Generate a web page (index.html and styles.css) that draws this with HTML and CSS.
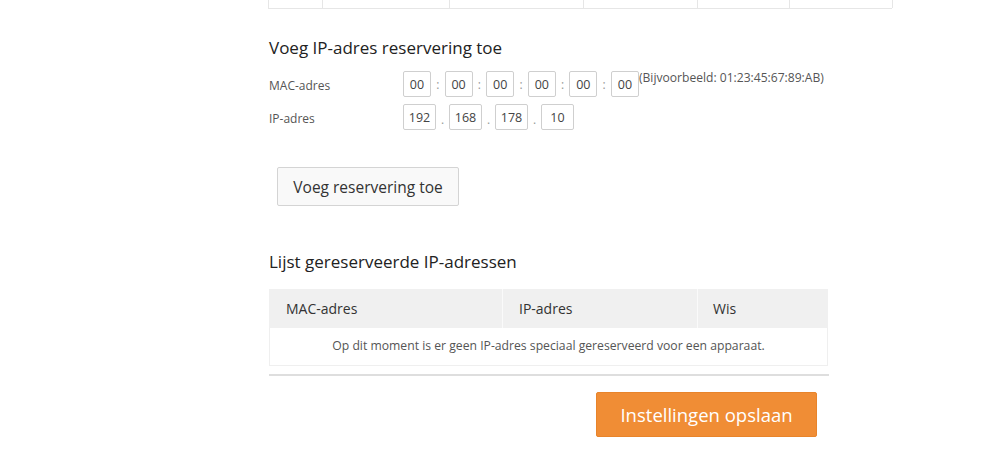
FILE: index.html
```html
<!DOCTYPE html>
<html lang="nl">
<head>
<meta charset="utf-8">
<title>IP-adres reservering</title>
<link rel="stylesheet" href="styles.css">
</head>
<body>
<div class="page">
  <div class="prev-table">
    <div class="pc"></div><div class="pc"></div><div class="pc"></div><div class="pc"></div><div class="pc"></div><div class="pc"></div>
  </div>

  <h2 class="heading h-add">Voeg IP-adres reservering toe</h2>

  <div class="form-row">
    <div class="label">MAC-adres</div>
    <div class="fields">
      <span class="box mac">00</span><span class="sep colon">:</span>
      <span class="box mac">00</span><span class="sep colon">:</span>
      <span class="box mac">00</span><span class="sep colon">:</span>
      <span class="box mac">00</span><span class="sep colon">:</span>
      <span class="box mac">00</span><span class="sep colon">:</span>
      <span class="box mac">00</span>
      <span class="example">(Bijvoorbeeld: 01:23:45:67:89:AB)</span>
    </div>
  </div>
  <div class="form-row ip-row">
    <div class="label">IP-adres</div>
    <div class="fields">
      <span class="box ip">192</span><span class="sep dot">.</span>
      <span class="box ip">168</span><span class="sep dot">.</span>
      <span class="box ip">178</span><span class="sep dot">.</span>
      <span class="box ip">10</span>
    </div>
  </div>

  <button class="btn-add" type="button">Voeg reservering toe</button>

  <h2 class="heading h-list">Lijst gereserveerde IP-adressen</h2>

  <div class="res-table">
    <div class="th c1">MAC-adres</div>
    <div class="th c2">IP-adres</div>
    <div class="th c3">Wis</div>
    <div class="empty">Op dit moment is er geen IP-adres speciaal gereserveerd voor een apparaat.</div>
  </div>

  <div class="divider"></div>

  <div class="actions">
    <button class="btn-save" type="button">Instellingen opslaan</button>
  </div>
</div>
</body>
</html>
```

FILE: styles.css
```css
* { box-sizing: border-box; }
html, body { margin: 0; padding: 0; background: #fff; }
body {
  font-family: "Open Sans", "Noto Sans", sans-serif;
  color: #333;
}
.page {
  padding-left: 268px;
  width: 900px;
}
.prev-table {
  display: grid;
  grid-template-columns: 54px 127px 134px 114px 92px 103px;
  width: 624px;
  height: 9px;
  border-bottom: 1px solid #e6e6e6;
  border-left: 1px solid #e6e6e6;
}
.pc {
  border-right: 1px solid #e6e6e6;
}
.heading {
  margin: 0;
  font-weight: 400;
  font-size: 17px;
  line-height: 24px;
  color: #222;
  padding-left: 1px;
}
.h-add { margin-top: 27px; }
.form-row {
  display: flex;
  align-items: flex-start;
  height: 26px;
  margin-top: 11px;
  padding-left: 1px;
}
.ip-row { margin-top: 7px; }
.label {
  width: 134px;
  font-size: 12px;
  line-height: 26px;
  padding-top: 2px;
  color: #555;
}
.fields {
  display: flex;
  align-items: flex-start;
  height: 26px;
}
.box {
  display: inline-flex;
  align-items: center;
  justify-content: center;
  height: 26px;
  border: 1px solid #cfcfcf;
  border-radius: 2px;
  font-size: 12.5px;
  color: #444;
  background: #fff;
}
.mac { width: 28px; }
.ip { width: 33px; }
.sep {
  display: inline-flex;
  justify-content: center;
  font-size: 12px;
  color: #999;
  height: 26px;
  line-height: 26px;
}
.colon { width: 13.6px; padding-top: 1px; }
.dot { width: 13px; padding-top: 5px; line-height: 21px; }
.example {
  font-size: 12.1px;
  color: #555;
  line-height: 16px;
  margin-top: -1px;
}
.btn-add {
  display: block;
  margin: 37px 0 0 9px;
  width: 182px;
  height: 39px;
  background: #f9f9f9;
  border: 1px solid #d4d4d4;
  border-radius: 2px;
  font-family: inherit;
  font-size: 15.5px;
  color: #333;
  padding: 0;
}
.h-list { margin-top: 44px; }
.res-table {
  margin-top: 15px;
  margin-left: 1px;
  width: 559px;
  display: grid;
  grid-template-columns: 234px 195px 130px;
}
.th {
  background: #f0f0f0;
  height: 39px;
  line-height: 39px;
  font-size: 14px;
  color: #333;
  padding-left: 17px;
}
.c1, .c2 { border-right: 1px solid #fafafa; }
.c2 { padding-left: 16px; }
.c3 { padding-left: 15px; }
.empty {
  grid-column: 1 / 4;
  height: 38px;
  line-height: 36px;
  text-align: center;
  font-size: 12.2px;
  color: #555;
  border: 1px solid #efefef;
  border-top: none;
}
.divider {
  margin-top: 8px;
  margin-left: 1px;
  width: 560px;
  height: 2px;
  background: #dedede;
}
.actions {
  display: flex;
  justify-content: flex-end;
  width: 549px;
  margin-top: 16px;
}
.btn-save {
  width: 221px;
  height: 45px;
  background: #f08d35;
  border: 1px solid #e8842b;
  border-radius: 2px;
  color: #fff;
  font-family: inherit;
  font-size: 18.5px;
  padding: 0;
}
```
